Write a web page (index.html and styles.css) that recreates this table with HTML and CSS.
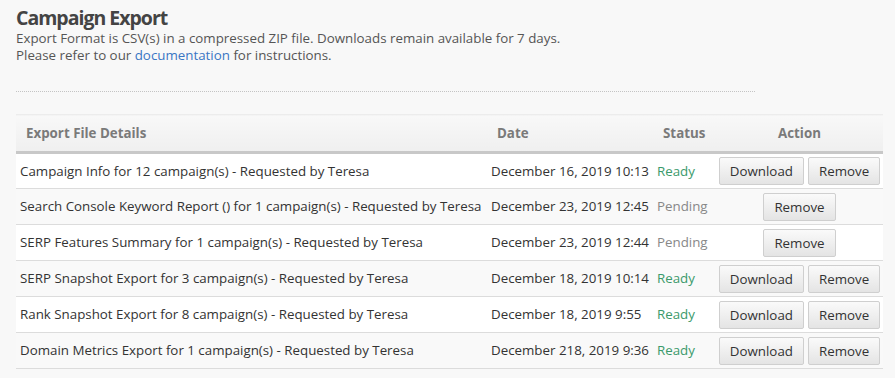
FILE: index.html
```html
<!DOCTYPE html>
<html lang="en">
<head>
    <meta charset="UTF-8">
    <title>Campaign Export</title>
    <link rel="stylesheet" href="styles.css">
</head>
<body>
    <div class="page">
        <div class="intro">
            <h1>Campaign Export</h1>
            <p>Export Format is CSV(s) in a compressed ZIP file. Downloads remain available for 7 days.</p>
            <p>Please refer to our <a href="#">documentation</a> for instructions.</p>
        </div>

        <table class="exports">
            <colgroup>
                <col class="col-details">
                <col class="col-date">
                <col class="col-status">
                <col class="col-action">
            </colgroup>
            <thead>
                <tr>
                    <th>Export File Details</th>
                    <th>Date</th>
                    <th>Status</th>
                    <th class="center">Action</th>
                </tr>
            </thead>
            <tbody>
                <tr>
                    <td>Campaign Info for 12 campaign(s) - Requested by Teresa</td>
                    <td>December 16, 2019 10:13</td>
                    <td class="ready">Ready</td>
                    <td class="actions"><button class="btn">Download</button><button class="btn">Remove</button></td>
                </tr>
                <tr>
                    <td>Search Console Keyword Report () for 1 campaign(s) - Requested by Teresa</td>
                    <td>December 23, 2019 12:45</td>
                    <td class="pending">Pending</td>
                    <td class="actions"><button class="btn">Remove</button></td>
                </tr>
                <tr>
                    <td>SERP Features Summary for 1 campaign(s) - Requested by Teresa</td>
                    <td>December 23, 2019 12:44</td>
                    <td class="pending">Pending</td>
                    <td class="actions"><button class="btn">Remove</button></td>
                </tr>
                <tr>
                    <td>SERP Snapshot Export for 3 campaign(s) - Requested by Teresa</td>
                    <td>December 18, 2019 10:14</td>
                    <td class="ready">Ready</td>
                    <td class="actions"><button class="btn">Download</button><button class="btn">Remove</button></td>
                </tr>
                <tr>
                    <td>Rank Snapshot Export for 8 campaign(s) - Requested by Teresa</td>
                    <td>December 18, 2019 9:55</td>
                    <td class="ready">Ready</td>
                    <td class="actions"><button class="btn">Download</button><button class="btn">Remove</button></td>
                </tr>
                <tr>
                    <td>Domain Metrics Export for 1 campaign(s) - Requested by Teresa</td>
                    <td>December 218, 2019 9:36</td>
                    <td class="ready">Ready</td>
                    <td class="actions"><button class="btn">Download</button><button class="btn">Remove</button></td>
                </tr>
            </tbody>
        </table>
    </div>
</body>
</html>
```

FILE: styles.css
```css
* {
    margin: 0;
    padding: 0;
    box-sizing: border-box;
}

body {
    background: #f8f8f8;
    color: #444;
    font-family: 'Open Sans', 'Liberation Sans', sans-serif;
    font-size: 13.33px;
    line-height: 17px;
}

.page {
    padding: 6px 12px 0 16px;
}

.intro {
    width: 739px;
    padding-bottom: 27px;
    border-bottom: 1px dotted #c4c4c4;
    margin-bottom: 22px;
}

.intro h1 {
    font-size: 19.5px;
    line-height: 24px;
    font-weight: 700;
    letter-spacing: -1px;
    color: #444;
}

.intro p {
    color: #555;
}

.intro a {
    color: #3a76c4;
    text-decoration: none;
}

.exports {
    width: 867px;
    border-collapse: collapse;
    table-layout: fixed;
}

.col-details { width: 471px; }
.col-date { width: 166px; }
.col-status { width: 63px; }
.col-action { width: 167px; }

.exports th {
    height: 38px;
    padding: 0 10px;
    text-align: left;
    font-weight: 700;
    color: #7a7a7a;
    background: linear-gradient(#f8f8f8, #efefef);
    border-top: 1px solid #ececec;
    border-bottom: 3px solid #c8c8c8;
}

.exports th.center {
    text-align: center;
}

.exports td {
    height: 36px;
    padding: 0 4px;
    color: #333;
    white-space: nowrap;
    border-bottom: 1px solid #dcdcdc;
}

.exports tbody tr:nth-child(odd) {
    background: #fff;
}

.exports tbody tr:nth-child(even) {
    background: #f9f9f9;
}

.exports td.ready {
    color: #3b9a6b;
}

.exports td.pending {
    color: #888;
}

.exports td.actions {
    text-align: center;
    padding: 0;
}

.btn {
    font-family: inherit;
    font-size: 13.33px;
    color: #333;
    height: 28px;
    padding: 0 10px;
    margin: 0 2px;
    border: 1px solid #cfcfcf;
    border-radius: 2px;
    background: linear-gradient(#fafafa, #e4e4e4);
    cursor: pointer;
    vertical-align: middle;
}
```
